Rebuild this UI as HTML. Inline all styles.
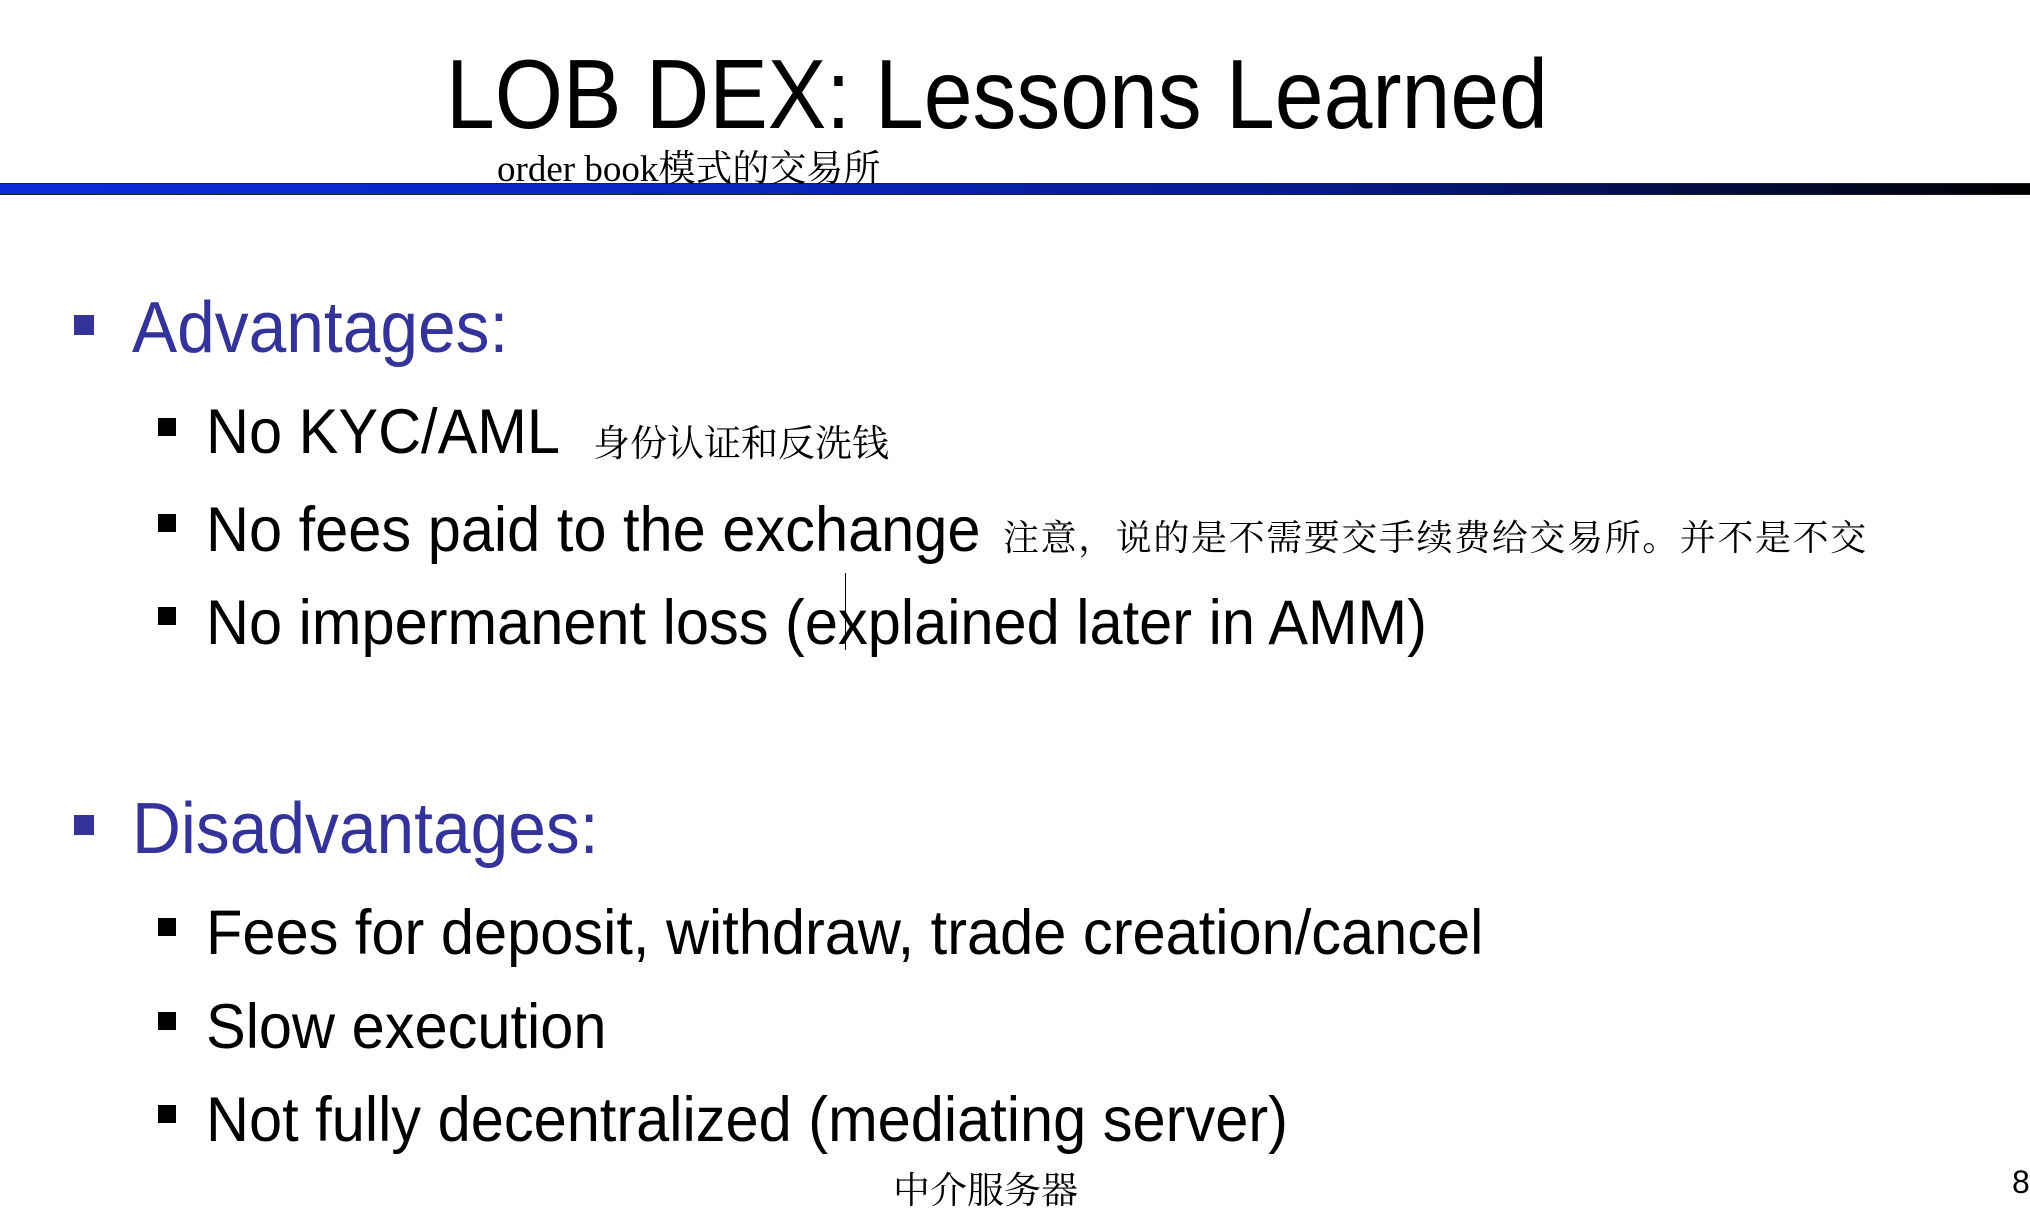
<!DOCTYPE html>
<html><head><meta charset="utf-8"><style>
html,body{margin:0;padding:0;background:#fff;}
body{width:2030px;height:1224px;position:relative;overflow:hidden;font-family:"Liberation Sans","Noto Sans CJK SC",sans-serif;}
.t{position:absolute;white-space:nowrap;transform-origin:0 100%;line-height:1;}
.cn{font-family:"Noto Serif CJK SC","Liberation Serif",serif;color:#000;}
.sq{position:absolute;}
</style></head><body>
<div class="t" style="left:446px;top:45px;font-size:98px;transform:scaleX(0.895);color:#000;">LOB DEX: Lessons Learned</div>
<div style="position:absolute;left:0;top:183px;width:2030px;height:12px;background:linear-gradient(90deg,#0a2ad8 0%,#0a25c0 35%,#061a8a 65%,#000 100%);border-top:1px solid #222;border-bottom:1px solid #222;box-sizing:border-box;"></div>
<div class="t cn" style="left:497px;top:151px;font-size:37px;font-family:'Liberation Serif','Noto Serif CJK SC',serif;">order book模式的交易所</div>

<div class="sq" style="left:74px;top:315px;width:20px;height:20px;background:#333399;"></div>
<div class="t" style="left:132px;top:292px;font-size:72px;color:#333399;transform:scaleX(0.94);">Advantages:</div>

<div class="sq" style="left:158px;top:418px;width:18px;height:18px;background:#000;"></div>
<div class="t" style="left:206px;top:401px;font-size:63px;transform:scaleX(0.945);">No KYC/AML</div>
<div class="t cn" style="left:593px;top:422px;font-size:37px;">身份认证和反洗钱</div>

<div class="sq" style="left:158px;top:514px;width:18px;height:18px;background:#000;"></div>
<div class="t" style="left:206px;top:499px;font-size:63px;transform:scaleX(0.945);">No fees paid to the exchange</div>
<div class="t cn" style="left:1003px;top:518px;font-size:36px;letter-spacing:1.6px;">注意，说的是不需要交手续费给交易所。并不是不交</div>

<div class="sq" style="left:158px;top:607px;width:18px;height:18px;background:#000;"></div>
<div class="t" style="left:206px;top:592px;font-size:63px;transform:scaleX(0.945);">No impermanent loss (explained later in AMM)</div>
<div style="position:absolute;left:845px;top:573px;width:1px;height:77px;background:#000;"></div>

<div class="sq" style="left:74px;top:815px;width:20px;height:20px;background:#333399;"></div>
<div class="t" style="left:132px;top:793px;font-size:72px;color:#333399;transform:scaleX(0.94);">Disadvantages:</div>

<div class="sq" style="left:158px;top:918px;width:18px;height:18px;background:#000;"></div>
<div class="t" style="left:206px;top:902px;font-size:63px;transform:scaleX(0.945);">Fees for deposit, withdraw, trade creation/cancel</div>

<div class="sq" style="left:158px;top:1012px;width:18px;height:18px;background:#000;"></div>
<div class="t" style="left:206px;top:996px;font-size:63px;transform:scaleX(0.945);">Slow execution</div>

<div class="sq" style="left:158px;top:1105px;width:18px;height:18px;background:#000;"></div>
<div class="t" style="left:206px;top:1089px;font-size:63px;transform:scaleX(0.945);">Not fully decentralized (mediating server)</div>

<div class="t cn" style="left:893px;top:1169px;font-size:37px;">中介服务器</div>
<div class="t" style="left:2012px;top:1166px;font-size:32px;">8</div>
</body></html>
